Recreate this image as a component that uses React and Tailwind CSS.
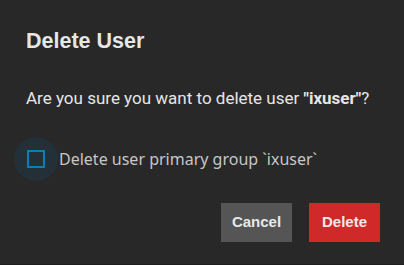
export default function App() {
  return (
    <div className="w-[404px] h-[265px] bg-[#282828] overflow-hidden border-b border-[#1e1e1e] flex flex-col">
      <div className="pl-[26px] pt-[28px] text-[21.5px] leading-[26px] font-bold text-[#e6e6e6]" style={{ fontFamily: '"Liberation Sans", Arial, sans-serif' }}>
        Delete User
      </div>
      <div className="pl-[26px] mt-[34px] text-[17px] leading-[20px] text-[#e6e6e6]" style={{ fontFamily: 'Roboto, sans-serif' }}>
        Are you sure you want to delete user <span className="font-bold">"ixuser"</span>?
      </div>
      <div className="flex items-center pl-[14px] mt-[29px]">
        <div className="w-[44px] h-[44px] rounded-full bg-[#243037] flex items-center justify-center">
          <div className="w-[18px] h-[18px] border-2 border-[#0b7fb5]" />
        </div>
        <span className="ml-[1px] text-[16px] text-[#c6c6c6]" style={{ fontFamily: '"Noto Sans", sans-serif' }}>
          Delete user primary group `ixuser`
        </span>
      </div>
      <div className="flex justify-end gap-[17px] pr-[24px] mt-[22px]">
        <button className="w-[71px] h-[39px] bg-[#555555] text-[#e8e8e8] font-bold text-[15px]" style={{ fontFamily: '"Liberation Sans", Arial, sans-serif' }}>
          Cancel
        </button>
        <button className="w-[71px] h-[39px] bg-[#cf292a] text-[#f0e8e8] font-bold text-[15px]" style={{ fontFamily: '"Liberation Sans", Arial, sans-serif' }}>
          Delete
        </button>
      </div>
    </div>
  );
}
